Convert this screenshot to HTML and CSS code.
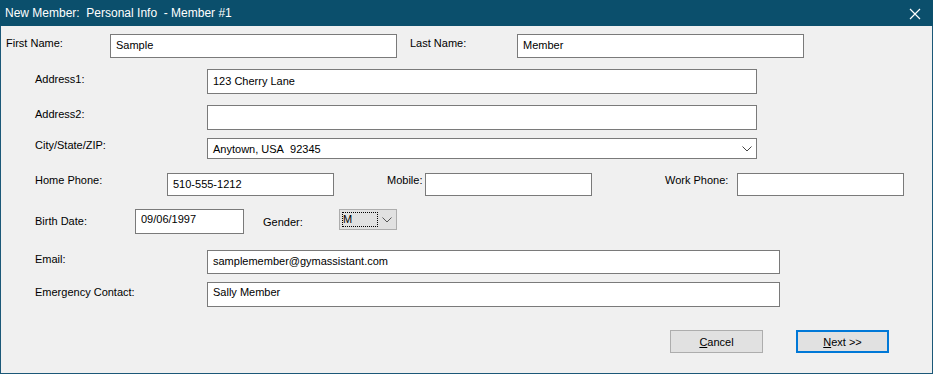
FILE: index.html
```html
<!DOCTYPE html>
<html lang="en">
<head>
    <meta charset="UTF-8">
    <title>New Member: Personal Info - Member #1</title>
    <link rel="stylesheet" href="styles.css">
</head>
<body>
    <div class="window">
        <div class="titlebar">
            <span class="title">New Member:  Personal Info  - Member #1</span>
            <svg class="close" width="12" height="12" viewBox="0 0 12 12">
                <path d="M1 1 L11 11 M11 1 L1 11" stroke="#fff" stroke-width="1.2" fill="none"/>
            </svg>
        </div>

        <div class="form">
            <!-- name -->
            <div class="row row-name">
                <label class="lbl w-first">First Name:</label>
                <input class="field w-name" type="text" value="Sample">
                <label class="lbl w-last">Last Name:</label>
                <input class="field w-name" type="text" value="Member">
            </div>

            <!-- address -->
            <div class="row row-addr1 indent">
                <label class="lbl w-addr down1">Address1:</label>
                <input class="field w-wide tall" type="text" value="123 Cherry Lane">
            </div>
            <div class="row row-addr2 indent">
                <label class="lbl w-addr">Address2:</label>
                <input class="field w-wide tall" type="text" value="">
            </div>
            <div class="row row-city indent">
                <label class="lbl w-addr up2">City/State/ZIP:</label>
                <div class="combo w-wide">
                    <span>Anytown, USA&nbsp; 92345</span>
                    <svg width="10" height="6" viewBox="0 0 10 6"><path d="M0.5 0.5 L5 5 L9.5 0.5" stroke="#444" fill="none"/></svg>
                </div>
            </div>

            <!-- phones -->
            <div class="row row-phone indent">
                <label class="lbl w-home up2">Home Phone:</label>
                <input class="field w-phone" type="text" value="510-555-1212">
                <label class="lbl w-mobile up2">Mobile:</label>
                <input class="field w-phone" type="text" value="">
                <label class="lbl w-work up2">Work Phone:</label>
                <input class="field w-phone" type="text" value="">
            </div>

            <!-- birth / gender -->
            <div class="row row-birth indent">
                <label class="lbl w-birth down2">Birth Date:</label>
                <input class="field w-date tall top" type="text" value="09/06/1997">
                <label class="lbl w-gender down3">Gender:</label>
                <div class="gender">
                    <span class="focus">M</span>
                    <svg width="10" height="6" viewBox="0 0 10 6"><path d="M0.5 0.5 L5 5 L9.5 0.5" stroke="#555" fill="none"/></svg>
                </div>
            </div>

            <!-- contact -->
            <div class="row row-email indent">
                <label class="lbl w-addr">Email:</label>
                <input class="field w-email" type="text" value="samplemember@gymassistant.com">
            </div>
            <div class="row row-emerg indent">
                <label class="lbl w-addr down1">Emergency Contact:</label>
                <input class="field w-email tall top" type="text" value="Sally Member">
            </div>

            <div class="buttons">
                <button class="btn"><u>C</u>ancel</button>
                <button class="btn btn-default"><u>N</u>ext &gt;&gt;</button>
            </div>
        </div>
    </div>
</body>
</html>
```

FILE: styles.css
```css
body { margin: 0; background: #f0f0f0; font-family: "Liberation Sans", Arial, sans-serif; font-size: 11px; color: #000; }

.window { width: 933px; height: 374px; box-sizing: border-box; border: 1px solid #1b5878; border-top: 0; background: #f0f0f0; }

.titlebar { height: 26px; background: #0b4f6c; margin: 0 -1px; padding: 0 12px 0 5px; display: flex; align-items: center; justify-content: space-between; color: #fff; }
.title { font-size: 12px; white-space: pre; padding-bottom: 1px; }
.close { margin-top: 1px; }

.form { padding-left: 5px; }
.indent { padding-left: 29px; }

.row { display: flex; align-items: flex-start; }
.row-name { margin-top: 8px; }
.row-addr1 { margin-top: 11px; }
.row-addr2 { margin-top: 11px; }
.row-city { margin-top: 8px; }
.row-phone { margin-top: 14px; }
.row-birth { margin-top: 13px; }
.row-email { margin-top: 16px; }
.row-emerg { margin-top: 8px; }

.lbl { line-height: 19px; white-space: nowrap; }
.up2 { margin-top: -2px; }
.down1 { margin-top: 1px; }
.down2 { margin-top: 3px; }
.down3 { margin-top: 4px; }

.w-first { width: 104px; }
.w-last { width: 107px; margin-left: 13px; }
.w-addr { width: 172px; }
.w-home { width: 132px; }
.w-mobile { width: 38px; margin-left: 53px; }
.w-work { width: 72px; margin-left: 73px; }
.w-birth { width: 100px; }
.w-gender { width: 76px; margin-left: 19px; }

.field { box-sizing: border-box; height: 24px; margin: 0; padding: 0 5px 2px; border: 1px solid #7a7a7a; background: #fff; font-family: inherit; font-size: 11px; color: #000; outline: none; }
.field.tall { height: 25px; }
.field.top { padding-bottom: 5px; }
.w-name { width: 287px; }
.w-wide { width: 550px; }
.w-phone { width: 167px; height: 23px; }
.w-date { width: 109px; }
.w-email { width: 573px; }

.combo { box-sizing: border-box; height: 21px; border: 1px solid #7a7a7a; background: #fff; display: flex; align-items: center; justify-content: space-between; padding: 0 4px 0 5px; }
.combo svg { margin-top: 1px; }

.gender { box-sizing: border-box; width: 58px; height: 21px; border: 1px solid #adadad; background: #e1e1e1; display: flex; align-items: center; justify-content: space-between; padding: 0 4px 0 2px; }
.focus { box-sizing: border-box; width: 36px; height: 15px; border: 1px dotted #000; line-height: 13px; padding-left: 0; }

.buttons { display: flex; justify-content: flex-end; gap: 33px; margin-top: 23px; padding-right: 43px; }
.btn { box-sizing: border-box; width: 93px; height: 23px; margin: 0; padding: 0; border: 1px solid #adadad; background: #e1e1e1; font-family: inherit; font-size: 11px; color: #000; }
.btn-default { border: 2px solid #0078d7; }
```
